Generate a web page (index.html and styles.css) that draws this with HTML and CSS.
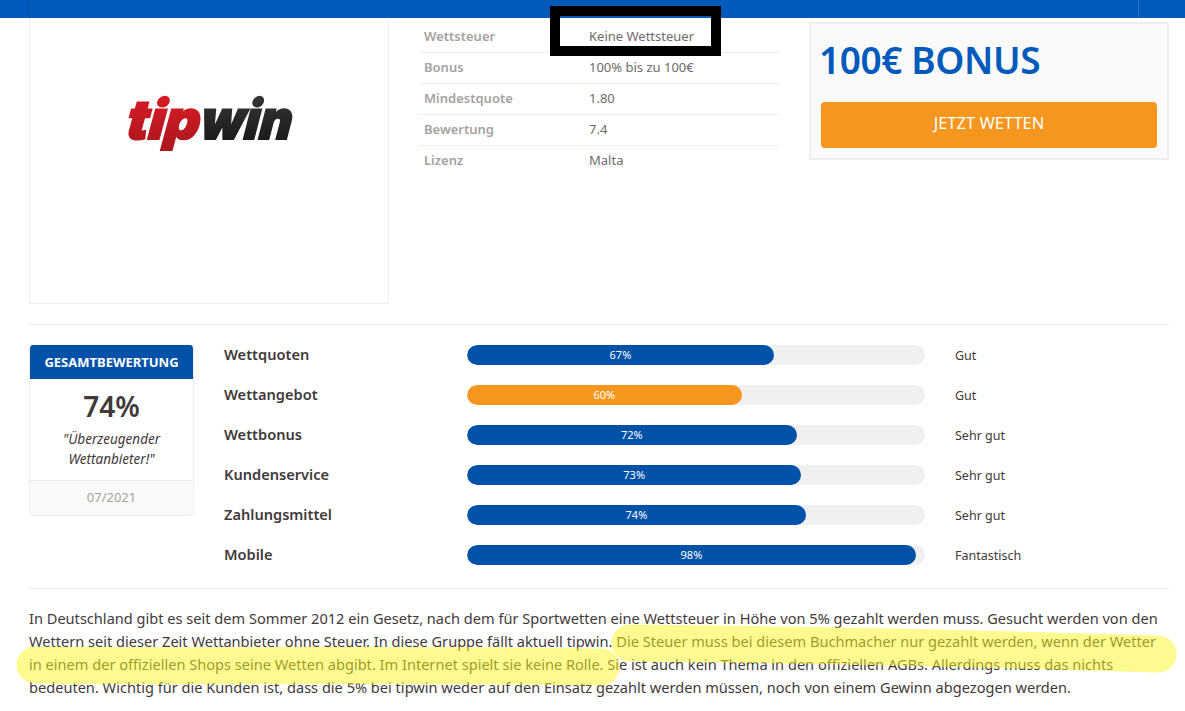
FILE: index.html
```html
<!DOCTYPE html>
<html lang="de">
<head>
<meta charset="utf-8">
<title>tipwin</title>
<link rel="stylesheet" href="styles.css">
</head>
<body>
<div class="topbar"><i class="tick tick-l"></i><i class="tick tick-r"></i></div>
<main class="page">
  <section class="head">
    <div class="logo-box">
      <svg class="logo" width="170" height="64" viewBox="0 0 170 64" role="img" aria-label="tipwin">
        <defs>
          <linearGradient id="red" x1="0" y1="0" x2="0" y2="1"><stop offset="0" stop-color="#e01c26"/><stop offset="1" stop-color="#a8171d"/></linearGradient>
          <linearGradient id="dark" x1="0" y1="0" x2="0" y2="1"><stop offset="0" stop-color="#3a3a3a"/><stop offset="1" stop-color="#141414"/></linearGradient>
        </defs>
        <text class="logo-t red" x="7" y="49" textLength="73" lengthAdjust="spacingAndGlyphs" transform="skewX(-6)">tip</text>
        <text class="logo-t dark" x="81" y="49" textLength="91" lengthAdjust="spacingAndGlyphs" transform="skewX(-6)">win</text>
      </svg>
    </div>
    <table class="facts">
      <tr><th>Wettsteuer</th><td>Keine Wettsteuer</td></tr>
      <tr><th>Bonus</th><td>100% bis zu 100€</td></tr>
      <tr><th>Mindestquote</th><td>1.80</td></tr>
      <tr><th>Bewertung</th><td>7.4</td></tr>
      <tr><th>Lizenz</th><td>Malta</td></tr>
    </table>
    <aside class="bonus">
      <div class="bonus-title">100€ BONUS</div>
      <a class="cta">JETZT WETTEN</a>
    </aside>
  </section>
  <section class="rating">
    <div class="card">
      <div class="card-head">GESAMTBEWERTUNG</div>
      <div class="card-body">
        <div class="score">74%</div>
        <div class="quote">"Überzeugender Wettanbieter!"</div>
      </div>
      <div class="card-foot">07/2021</div>
    </div>
    <div class="bars">
      <div class="row"><span class="name">Wettquoten</span><div class="track"><div class="fill" style="width:67%">67%</div></div><span class="verdict">Gut</span></div>
      <div class="row"><span class="name">Wettangebot</span><div class="track"><div class="fill orange" style="width:60%">60%</div></div><span class="verdict">Gut</span></div>
      <div class="row"><span class="name">Wettbonus</span><div class="track"><div class="fill" style="width:72%">72%</div></div><span class="verdict">Sehr gut</span></div>
      <div class="row"><span class="name">Kundenservice</span><div class="track"><div class="fill" style="width:73%">73%</div></div><span class="verdict">Sehr gut</span></div>
      <div class="row"><span class="name">Zahlungsmittel</span><div class="track"><div class="fill" style="width:74%">74%</div></div><span class="verdict">Sehr gut</span></div>
      <div class="row"><span class="name">Mobile</span><div class="track"><div class="fill" style="width:98%">98%</div></div><span class="verdict">Fantastisch</span></div>
    </div>
  </section>
  <p class="copy">In Deutschland gibt es seit dem Sommer 2012 ein Gesetz, nach dem für Sportwetten eine Wettsteuer in Höhe von 5% gezahlt werden muss. Gesucht werden von den Wettern seit dieser Zeit Wettanbieter ohne Steuer. In diese Gruppe fällt aktuell tipwin. Die Steuer muss bei diesem Buchmacher nur gezahlt werden, wenn der Wetter in einem der offiziellen Shops seine Wetten abgibt. Im Internet spielt sie keine Rolle. Sie ist auch kein Thema in den offiziellen AGBs. Allerdings muss das nichts bedeuten. Wichtig für die Kunden ist, dass die 5% bei tipwin weder auf den Einsatz gezahlt werden müssen, noch von einem Gewinn abgezogen werden.</p>
</main>
<div class="annot-box"></div>
<svg class="marker" width="1185" height="711" viewBox="0 0 1185 711" aria-hidden="true">
  <path d="M35 665 C150 667 420 664 601 667 M630 643 C800 645 1000 649 1158 654" />
</svg>
</body>
</html>
```
FILE: styles.css
```css
* { box-sizing: border-box; }
html, body { margin: 0; height: 711px; overflow: hidden; }
body { background: #fff; color: #3f3a3a; font-family: "Noto Sans", "Open Sans", sans-serif; font-size: 14px; position: relative; }
.topbar { height: 18px; background: #005abb; position: relative; }
.tick { position: absolute; top: 0; width: 1px; height: 18px; }
.tick-l { left: 29px; background: #0052a8; }
.tick-r { left: 1138px; background: #2a72c2; }
.page { padding: 0 16px 0 29px; }
.head { display: flex; height: 307px; border-bottom: 1px solid #eee; align-items: flex-start; }
.logo-box { width: 360px; height: 286px; border: 1px solid #eee; border-top: 0; display: flex; align-items: flex-start; justify-content: center; padding-top: 72px; flex: none; }
.logo { overflow: visible; }
.logo-t { font-family: "Inter", "Liberation Sans", sans-serif; font-weight: 900; font-style: italic; font-size: 54px; stroke-width: 2px; }
.logo-t.red { fill: url(#red); stroke: url(#red); }
.logo-t.dark { fill: url(#dark); stroke: url(#dark); }
.facts { width: 360px; margin-left: 30px; border-collapse: collapse; font-size: 13px; flex: none; }
.facts tr { height: 31px; border-bottom: 1px solid #eee; }
.facts tr:first-child { height: 34px; }
.facts tr:last-child { border-bottom: 0; }
.facts th { width: 170px; padding: 0 0 2px 5px; text-align: left; font-weight: 600; color: #a6a2a2; }
.facts td { padding: 0 0 2px; color: #6f6b6b; }
.facts tr:first-child th, .facts tr:first-child td { padding-bottom: 0; padding-top: 2px; }
.bonus { width: 360px; height: 138px; margin: 4px 0 0 30px; border: 2px solid #eee; background: #fafafa; padding: 0 10px; flex: none; }
.bonus-title { font-size: 37px; font-weight: 600; color: #005abb; line-height: 72px; margin: 0 0 6px -2px; letter-spacing: -0.4px; }
.cta { display: block; height: 46px; line-height: 42px; background: #f5961e; color: #fff; text-align: center; font-size: 16.5px; border-radius: 4px; }
.rating { display: flex; height: 264px; padding-top: 20px; border-bottom: 1px solid #eee; }
.card { width: 165px; height: 171px; flex: none; border: 1px solid #eee; border-top: 0; border-radius: 4px; overflow: hidden; text-align: center; }
.card-head { height: 34px; margin: 0 -1px; background: #0051a8; color: #fff; font-weight: 700; font-size: 13px; line-height: 34px; }
.card-body { height: 101px; padding-top: 8px; }
.score { font-size: 28px; font-weight: 600; line-height: 38px; margin-bottom: 4px; }
.quote { font-style: italic; font-size: 13.5px; line-height: 20px; padding: 0 20px; }
.card-foot { height: 35px; background: #fafafa; border-top: 1px solid #eee; color: #a6a2a2; font-size: 13px; line-height: 33px; }
.bars { margin-left: 30px; flex: 1; display: flex; flex-direction: column; gap: 20px; }
.row { display: flex; align-items: center; height: 20px; }
.name { width: 243px; font-weight: 600; font-size: 14.6px; flex: none; line-height: 18px; margin-bottom: 2px; }
.track { width: 458px; height: 20px; border-radius: 10px; background: #f0f0f0; overflow: hidden; flex: none; }
.fill { height: 20px; border-radius: 10px; background: #0051a8; color: #fff; font-size: 11px; line-height: 19px; text-align: center; }
.fill.orange { background: #f5961e; }
.verdict { margin-left: 30px; font-size: 12.5px; }
.copy { margin: 18px 0 0; line-height: 23px; font-size: 14.58px; }
.annot-box { position: absolute; left: 550px; top: 6px; width: 171px; height: 50px; border: 10px solid #000; }
.marker { position: absolute; left: 0; top: 0; pointer-events: none; }
.marker path { fill: none; stroke: #fbf81f; stroke-opacity: .5; stroke-width: 37px; stroke-linecap: round; }
```
